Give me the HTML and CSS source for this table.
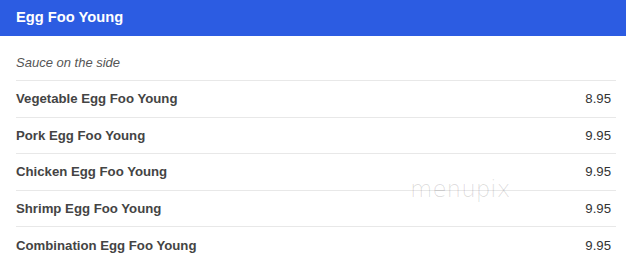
FILE: index.html
```html
<!DOCTYPE html>
<html>
<head>
<meta charset="utf-8">
<link rel="stylesheet" href="styles.css">
</head>
<body>
<div class="section">
  <div class="header">Egg Foo Young</div>
  <div class="body">
    <div class="note">Sauce on the side</div>
    <div class="row"><span class="name">Vegetable Egg Foo Young</span><span class="price">8.95</span></div>
    <div class="row"><span class="name">Pork Egg Foo Young</span><span class="price">9.95</span></div>
    <div class="row"><span class="name">Chicken Egg Foo Young</span><span class="price">9.95</span></div>
    <div class="row"><span class="name">Shrimp Egg Foo Young</span><span class="price">9.95</span></div>
    <div class="row"><span class="name">Combination Egg Foo Young</span><span class="price">9.95</span></div>
  </div>
  <div class="watermark">menupix</div>
</div>
</body>
</html>
```
FILE: styles.css
```css
html, body {
  margin: 0;
  padding: 0;
  background: #fff;
}
.section {
  position: relative;
  width: 626px;
  font-family: "Liberation Sans", Arial, sans-serif;
}
.header {
  height: 36px;
  background: #2c5ce2;
  color: #fff;
  font-weight: bold;
  font-size: 14.7px;
  line-height: 35px;
  padding-left: 16px;
  box-sizing: border-box;
}
.body {
  padding: 0 10px 0 16px;
}
.note {
  height: 45px;
  line-height: 54px;
  font-style: italic;
  font-size: 13px;
  color: #555;
  border-bottom: 1px solid #e8e8e8;
  box-sizing: border-box;
}
.row {
  display: flex;
  justify-content: space-between;
  align-items: center;
  height: 36.5px;
  border-bottom: 1px solid #e8e8e8;
  box-sizing: border-box;
  font-size: 13.2px;
}
.row:last-child {
  border-bottom: none;
}
.name {
  font-weight: bold;
  color: #444;
}
.price {
  color: #333;
  padding-right: 5px;
}
.watermark {
  position: absolute;
  left: 410px;
  top: 176px;
  font-family: "DejaVu Sans", sans-serif;
  font-size: 23px;
  font-weight: 200;
  color: rgba(0,0,0,0.14);
}
```
